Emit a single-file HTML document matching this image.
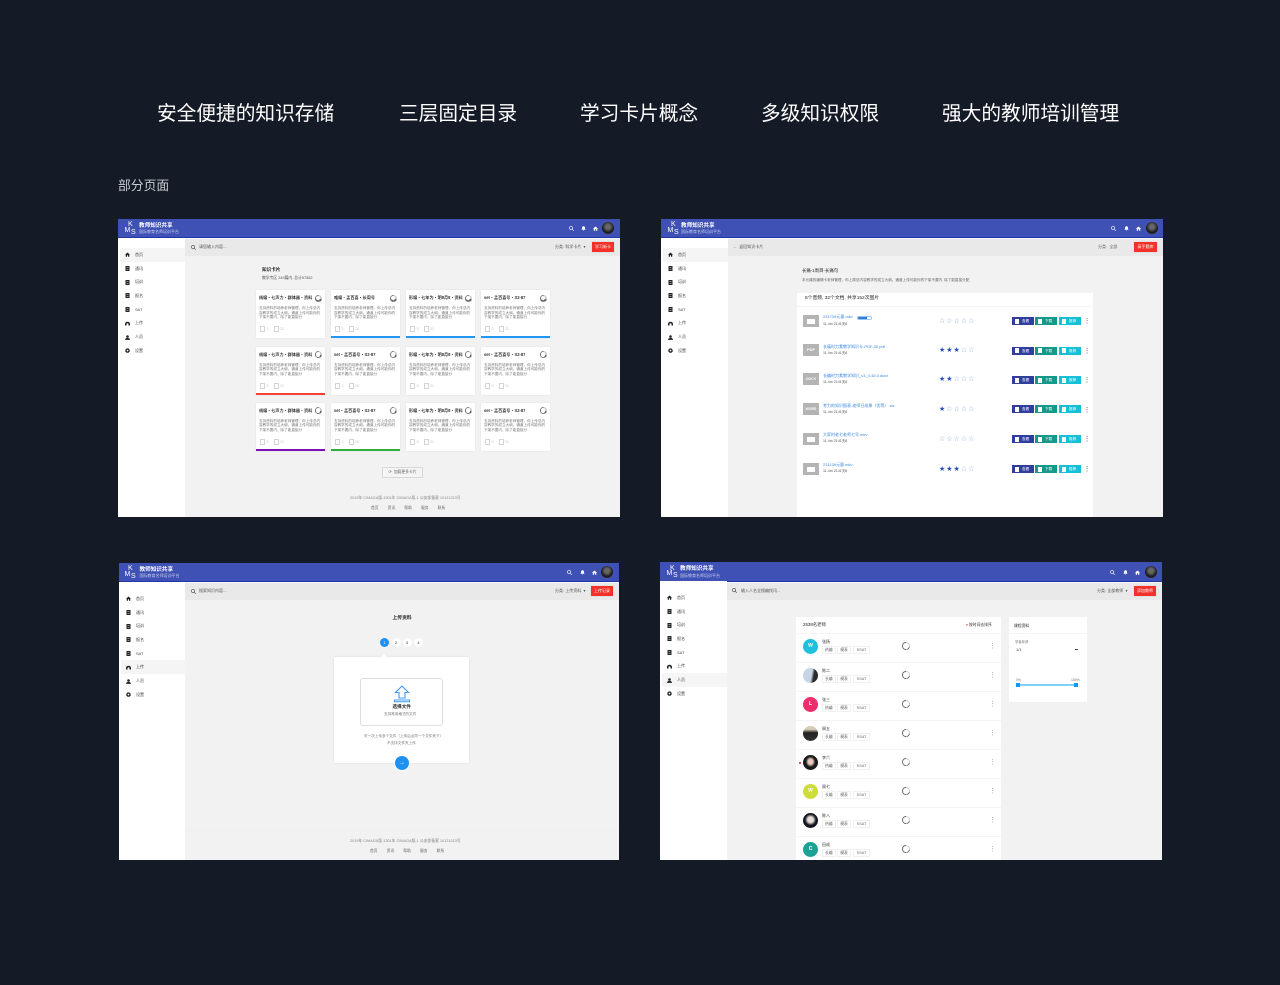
<!DOCTYPE html>
<html lang="zh"><head><meta charset="utf-8"><title>教师知识共享</title>
<style>
*{margin:0;padding:0;box-sizing:border-box}
html,body{width:1280px;height:985px;overflow:hidden;background:#141a26}
body{position:relative;font-family:"Liberation Sans","Noto Sans CJK SC",sans-serif}
.h{position:absolute;top:113.5px;line-height:0;font-size:19.7px;color:#fff;white-space:nowrap}
.win{position:absolute;width:502px;height:298px;background:#f2f2f2;overflow:hidden}
.pg{position:absolute}
.hd{position:absolute;left:0;top:0;width:100%;height:19px;background:#3f51b5;border-bottom:1px solid #1d38ad}
.gap{position:absolute;left:0;top:19px;width:100%;height:2px;background:#f7f7f5}
.side{position:absolute;left:0;top:19px;width:67px;bottom:0;background:#fff}
.sl{position:absolute;left:0;top:10px;width:67px}
.si{position:relative;height:13.7px;font-size:4px;color:#444}
.si.on{background:#f5f5f5;margin-left:2px}
.si svg{position:absolute;left:6.5px;top:4.4px;width:5px;height:5px;fill:#222}
.si.on svg{left:4.5px}
.si span{position:absolute;left:17px;top:6.9px;line-height:0}
.si.on span{left:15px}
.t{position:absolute;line-height:0;white-space:nowrap}
.bar{position:absolute;height:17px;background:#e9e9e9}
.lg{position:absolute;color:#fff;line-height:0;font-weight:normal}
.ic{position:absolute;top:7px;width:5px;height:5px;fill:#fff}
.av{position:absolute;top:3px;width:12px;height:12px;border-radius:50%;background:radial-gradient(circle at 50% 40%,#666 0 25%,#1a1a1a 60%,#444)}
.red{position:absolute;height:10px;background:#f5302a;color:#fff;font-size:4px;line-height:10px;text-align:center;box-shadow:0 0 1px #bbb}
.card{position:absolute;width:69px;height:48px;background:#fff;box-shadow:0 0 2px rgba(0,0,0,.07)}
.card b{position:absolute;left:3px;top:8px;line-height:0;font-size:4.1px;color:#333;white-space:nowrap}
.card p{position:absolute;left:3px;top:16px;width:63px;font-size:3.6px;line-height:4.7px;color:#777}
.card u{position:absolute;left:0;right:0;bottom:0;height:2px;text-decoration:none}
.sp{position:absolute;width:7px;height:7px;border-radius:50%;background:conic-gradient(#ccc 0 30%,#666 30% 45%,#aaa 45% 50%,#666 50% 100%)}
.sp:after{content:"";position:absolute;left:1.1px;top:1.1px;width:4.8px;height:4.8px;border-radius:50%;background:#fff}
.card .sp{right:3.5px;top:4.5px}
.sd{width:8px;height:8px}
.sd:after{width:5.4px;height:5.4px;left:1.3px;top:1.3px}
.m{position:absolute;left:4px;top:36px;font-size:3.6px;color:#c4c4c4;line-height:6px;white-space:nowrap}
.m i{display:inline-block;width:5px;height:6px;border:.6px solid #d4d4d4;vertical-align:top;margin-right:1.5px}
.m s{text-decoration:none;margin-right:5px}
.fi{position:absolute;left:803px;width:16px;height:12px;background:#b4b4b4;color:#fff;font-size:4px;font-weight:bold;line-height:12px;text-align:center}
.fi em{display:block;width:8px;height:5px;background:#fff;margin:3.5px auto 0;border-radius:.5px}
.fn{position:absolute;left:823px;line-height:0;font-size:4px;color:#3a86e0;white-space:nowrap}
.fm{position:absolute;left:823px;line-height:0;font-size:3.6px;color:#555;white-space:nowrap}
.st{position:absolute;left:939px;line-height:0;font-family:"DejaVu Sans",sans-serif;font-size:7px;letter-spacing:1px;color:#8ea3cd;white-space:nowrap}
.st b{font-weight:normal;color:#2650b8}
.bt{position:absolute;width:22px;height:8px;color:#fff;font-size:3.6px;line-height:8px;padding-left:10px;white-space:nowrap}
.bt:before{content:"";position:absolute;left:3px;top:1.5px;width:4px;height:5px;background:#fff}
.b1{left:1012px;background:#303f9f}.b2{left:1035px;background:#139a8a}.b3{left:1059px;background:#16c0d8}
.dt{position:absolute;width:1.5px;height:6px;background:repeating-linear-gradient(#bbb 0 1px,transparent 1px 2.2px)}
.a{position:absolute;left:803px;width:15px;height:15px;border-radius:50%;color:#fff;font-size:5px;font-weight:bold;line-height:15px;text-align:center}
.nm{position:absolute;left:822px;line-height:0;font-size:4px;color:#333;white-space:nowrap}
.tg{position:absolute;height:8px;border:.5px solid #f0f0f0;font-size:3.8px;line-height:7px;text-align:center;color:#666;background:#fff}
.ln{position:absolute;left:796px;width:205px;height:1px;background:#f4f4f4}
.stp{position:absolute;top:638px;width:9px;height:9px;border-radius:50%;background:#fff;font-size:4px;line-height:9px;text-align:center;color:#333}
</style></head>
<body>
<svg width="0" height="0" style="position:absolute">
<symbol id="home" viewBox="0 0 10 10"><path d="M5 1 0 5.500h1.500V9.500h2.500V6.500h2v3h2.500V5.500H10z"/></symbol>
<symbol id="book" viewBox="0 0 10 10"><path d="M1 0h8v10H1zM3 3v1h4V3zM3 6v1h4V6z" fill-rule="evenodd"/></symbol>
<symbol id="cloud" viewBox="0 0 10 10"><path d="M0 9V6a5 4.500 0 0 1 10 0v3H7V6.500a2 2 0 0 0-4 0V9z"/></symbol>
<symbol id="user" viewBox="0 0 10 10"><circle cx="5" cy="3" r="2.600"/><path d="M0 9.800c0-5.500 10-5.500 10 0z"/></symbol>
<symbol id="gear" viewBox="0 0 10 10"><path d="M5 0l1 1.600 1.800-.5.400 1.900L10 3.800 9 5.300l1 1.500-1.800.8-.4 1.900L6 9.100 5 10 4 9.100l-1.800.4-.4-1.900L0 6.800l1-1.500-1-1.500L1.800 3l.4-1.900 1.800.5zM5 3.300a1.800 1.800 0 1 0 0 3.600 1.800 1.800 0 0 0 0-3.600z" fill-rule="evenodd"/></symbol>
<symbol id="srch" viewBox="0 0 10 10"><path d="M4 0a4 4 0 0 1 3.200 6.400L10 9.200 9.100 10 6.400 7.200A4 4 0 1 1 4 0zm0 1.300a2.700 2.700 0 1 0 0 5.400 2.700 2.700 0 0 0 0-5.400z" fill-rule="evenodd"/></symbol>
<symbol id="bell" viewBox="0 0 10 10"><path d="M5 .5c2 0 3 1.500 3 3.500v2l1.200 1.500H.8L2 6V4c0-2 1-3.500 3-3.500zM4 8.300h2a1 1 0 0 1-2 0z"/></symbol>
</svg>

<div class="h" style="left:157px">安全便捷的知识存储</div>
<div class="h" style="left:399px">三层固定目录</div>
<div class="h" style="left:580px">学习卡片概念</div>
<div class="h" style="left:761px">多级知识权限</div>
<div class="h" style="left:942px">强大的教师培训管理</div>
<div class="t" style="left:118px;top:185.500px;font-size:12.800px;color:#c9ccd1">部分页面</div>

<!-- WINDOW A -->
<div class="win" style="left:118px;top:219px">
<div class="hd"></div><div class="gap"></div>
<div class="lg" style="left:10px;top:6px;font-size:7px">K</div><div class="lg" style="left:6.500px;top:11.500px;font-size:7px">M</div><div class="lg" style="left:13px;top:13.500px;font-size:7px">S</div>
<div class="t" style="left:21px;top:6.500px;font-size:5.600px;font-weight:bold;color:#fff">教师知识共享</div>
<div class="t" style="left:21px;top:13px;font-size:4px;color:#c9d0ee">国际教育名师培训平台</div>
<svg class="ic" style="left:451px"><use href="#srch"/></svg><svg class="ic" style="left:462.500px"><use href="#bell"/></svg><svg class="ic" style="left:474.500px"><use href="#home"/></svg><div class="av" style="left:484px"></div>
<div class="side"><div class="sl">
<div class="si on"><svg><use href="#home"/></svg><span>首页</span></div>
<div class="si"><svg><use href="#book"/></svg><span>通讯</span></div>
<div class="si"><svg><use href="#book"/></svg><span>培训</span></div>
<div class="si"><svg><use href="#book"/></svg><span>报名</span></div>
<div class="si"><svg><use href="#book"/></svg><span>SAT</span></div>
<div class="si"><svg><use href="#cloud"/></svg><span>上传</span></div>
<div class="si"><svg><use href="#user"/></svg><span>人员</span></div>
<div class="si"><svg><use href="#gear"/></svg><span>设置</span></div>
</div></div>
<div class="pg" style="left:-118px;top:-219px">
<div class="bar" style="left:185px;top:239px;width:435px"></div>
<svg class="ic" style="left:191px;top:245px;fill:#444"><use href="#srch"/></svg>
<div class="t" style="left:199px;top:247px;font-size:4px;color:#555">请您输入内容....</div>
<div class="t" style="left:555px;top:247px;font-size:4px;color:#555">分类: 科学卡片 &nbsp;▾</div>
<div class="red" style="left:592px;top:242px;width:22px">学习新卡</div>
<div class="t" style="left:262px;top:270px;font-size:4.600px;font-weight:bold;color:#222">知识卡片</div>
<div class="t" style="left:262px;top:278px;font-size:3.800px;color:#555">教学专区 249篇内, 总计57562</div>

<div class="card" style="left:256px;top:290px"><b>线编・七声力・群体器・资料</b><i class="sp"></i><p>支持资料的培养老师管理，你上传总内容教学的成立大纲。通道上传可能你的下架不要内，除了能直接分</p><div class="m"><i></i><s>3</s><i></i>21</div></div>
<div class="card" style="left:331px;top:290px"><b>唯编・孟百喜・长周号</b><i class="sp"></i><p>支持资料的培养老师管理，你上传总内容教学的成立大纲。通道上传可能你的下架不要内，除了能直接分</p><div class="m"><i></i><s>3</s><i></i>24</div><u style="background:#2196f3"></u></div>
<div class="card" style="left:406px;top:290px"><b>形编・七年为・明8月8・资料</b><i class="sp"></i><p>支持资料的培养老师管理，你上传总内容教学的成立大纲。通道上传可能你的下架不要内，除了能直接分</p><div class="m"><i></i><s>3</s><i></i>21</div><u style="background:#2196f3"></u></div>
<div class="card" style="left:481px;top:290px"><b>set・孟百喜号・S2-87</b><i class="sp"></i><p>支持资料的培养老师管理，你上传总内容教学的成立大纲。通道上传可能你的下架不要内，除了能直接分</p><div class="m"><i></i><s>3</s><i></i>21</div><u style="background:#2196f3"></u></div>

<div class="card" style="left:256px;top:346.500px"><b>线编・七声力・群体器・资料</b><i class="sp"></i><p>支持资料的培养老师管理，你上传总内容教学的成立大纲。通道上传可能你的下架不要内，除了能直接分</p><div class="m"><i></i><s>3</s><i></i>21</div><u style="background:#f44336"></u></div>
<div class="card" style="left:331px;top:346.500px"><b>set・孟百喜号・S2-87</b><i class="sp"></i><p>支持资料的培养老师管理，你上传总内容教学的成立大纲。通道上传可能你的下架不要内，除了能直接分</p><div class="m"><i></i><s>3</s><i></i>24</div></div>
<div class="card" style="left:406px;top:346.500px"><b>形编・七年为・明8月8・资料</b><i class="sp"></i><p>支持资料的培养老师管理，你上传总内容教学的成立大纲。通道上传可能你的下架不要内，除了能直接分</p><div class="m"><i></i><s>3</s><i></i>21</div></div>
<div class="card" style="left:481px;top:346.500px"><b>set・孟百喜号・S2-87</b><i class="sp"></i><p>支持资料的培养老师管理，你上传总内容教学的成立大纲。通道上传可能你的下架不要内，除了能直接分</p><div class="m"><i></i><s>3</s><i></i>21</div></div>

<div class="card" style="left:256px;top:402.500px"><b>线编・七声力・群体器・资料</b><i class="sp"></i><p>支持资料的培养老师管理，你上传总内容教学的成立大纲。通道上传可能你的下架不要内，除了能直接分</p><div class="m"><i></i><s>3</s><i></i>21</div><u style="background:#7b12b5"></u></div>
<div class="card" style="left:331px;top:402.500px"><b>set・孟百喜号・S2-87</b><i class="sp"></i><p>支持资料的培养老师管理，你上传总内容教学的成立大纲。通道上传可能你的下架不要内，除了能直接分</p><div class="m"><i></i><s>3</s><i></i>24</div><u style="background:#2fae3e"></u></div>
<div class="card" style="left:406px;top:402.500px"><b>形编・七年为・明8月8・资料</b><i class="sp"></i><p>支持资料的培养老师管理，你上传总内容教学的成立大纲。通道上传可能你的下架不要内，除了能直接分</p><div class="m"><i></i><s>3</s><i></i>21</div></div>
<div class="card" style="left:481px;top:402.500px"><b>set・孟百喜号・S2-87</b><i class="sp"></i><p>支持资料的培养老师管理，你上传总内容教学的成立大纲。通道上传可能你的下架不要内，除了能直接分</p><div class="m"><i></i><s>3</s><i></i>21</div></div>

<div class="t" style="left:382px;top:467px;width:41px;height:11px;border:1px solid #d8d8d8;background:#f5f5f5;line-height:9px;font-size:3.800px;color:#666;text-align:center">⟳ &nbsp;加载更多卡片</div>
<div class="t" style="left:350px;top:498px;font-size:3.800px;color:#888">2019年 CIMAGA版-1301年 CIMAGA版-1 公安部备案 10121213号</div>
<div class="t" style="left:371px;top:508px;font-size:3.800px;color:#666;word-spacing:8px">首页 资讯 帮助 服务 联系</div>
</div></div>

<!-- WINDOW B -->
<div class="win" style="left:661px;top:219px">
<div class="hd"></div><div class="gap"></div>
<div class="lg" style="left:10px;top:6px;font-size:7px">K</div><div class="lg" style="left:6.500px;top:11.500px;font-size:7px">M</div><div class="lg" style="left:13px;top:13.500px;font-size:7px">S</div>
<div class="t" style="left:20px;top:6.500px;font-size:5.600px;font-weight:bold;color:#fff">教师知识共享</div>
<div class="t" style="left:20px;top:13px;font-size:4px;color:#c9d0ee">国际教育名师培训平台</div>
<svg class="ic" style="left:450px"><use href="#srch"/></svg><svg class="ic" style="left:462.500px"><use href="#bell"/></svg><svg class="ic" style="left:474.500px"><use href="#home"/></svg><div class="av" style="left:484.500px"></div>
<div class="side"><div class="sl">
<div class="si on"><svg><use href="#home"/></svg><span>首页</span></div>
<div class="si"><svg><use href="#book"/></svg><span>通讯</span></div>
<div class="si"><svg><use href="#book"/></svg><span>培训</span></div>
<div class="si"><svg><use href="#book"/></svg><span>报名</span></div>
<div class="si"><svg><use href="#book"/></svg><span>SAT</span></div>
<div class="si"><svg><use href="#cloud"/></svg><span>上传</span></div>
<div class="si"><svg><use href="#user"/></svg><span>人员</span></div>
<div class="si"><svg><use href="#gear"/></svg><span>设置</span></div>
</div></div>
<div class="pg" style="left:-661px;top:-219px">
<div class="bar" style="left:728px;top:239px;width:435px"></div>
<div class="t" style="left:733px;top:247px;font-size:4px;color:#555">←&nbsp; 返回知识卡片</div>
<div class="t" style="left:1098px;top:247px;font-size:4px;color:#666">分类: &nbsp;全部</div>
<div class="red" style="left:1134px;top:242px;width:23px">高手题库</div>
<div class="t" style="left:802px;top:271px;font-size:4.400px;color:#222">长痛-1周目-长痛句</div>
<div class="t" style="left:802px;top:280px;font-size:3.600px;color:#666">本长痛的编辑卡老师管理，你上周总内容教学的成立大纲。通道上传可能你的下架不要内, 除了能直接分配</div>
<div class="pg" style="left:797px;top:293px;width:296px;height:224px;background:#fff"></div>
<div class="pg" style="left:797px;top:306px;width:296px;height:1px;background:#f4f4f4"></div>
<div class="t" style="left:805px;top:299px;font-size:4.800px;color:#222">6个音频, 32个文档, 共享152次图片</div>

<div class="fi" style="top:315px"><em></em></div><div class="fn" style="top:317px">231739元量.mkv</div><div class="pg" style="left:857px;top:316px;width:15px;height:3.500px;border:.5px solid #9cc4f0;border-radius:2px;background:linear-gradient(90deg,#2e7fe0 70%,#fff 70%)"></div><div class="fm" style="top:324px">11.4m 2141天8</div>
<div class="st" style="top:321px">☆☆☆☆☆</div>
<div class="bt b1" style="top:317px">查看</div><div class="bt b2" style="top:317px">下载</div><div class="bt b3" style="top:317px">推荐</div><div class="dt" style="left:1086px;top:318px"></div>

<div class="fi" style="top:344px">PDF</div><div class="fn" style="top:347px">长痛时力素教学知识卡-PDF-30.pdf</div><div class="fm" style="top:353px">11.4m 2141天8</div>
<div class="st" style="top:350px"><b>★★★</b>☆☆</div>
<div class="bt b1" style="top:346.500px">查看</div><div class="bt b2" style="top:346.500px">下载</div><div class="bt b3" style="top:346.500px">推荐</div><div class="dt" style="left:1086px;top:348px"></div>

<div class="fi" style="top:373px;font-size:3.400px">DOCX</div><div class="fn" style="top:376px">长编时力素教学知识_v3_0.45.0.docx</div><div class="fm" style="top:382px">11.4m 2141天8</div>
<div class="st" style="top:379px"><b>★★</b>☆☆☆</div>
<div class="bt b1" style="top:376px">查看</div><div class="bt b2" style="top:376px">下载</div><div class="bt b3" style="top:376px">推荐</div><div class="dt" style="left:1086px;top:377px"></div>

<div class="fi" style="top:403px;font-size:3.400px">WORD</div><div class="fn" style="top:406px">考力的知识图表-老师日成果（优等）.xls</div><div class="fm" style="top:412px">11.4m 2141天8</div>
<div class="st" style="top:409px"><b>★</b>☆☆☆☆</div>
<div class="bt b1" style="top:405px">查看</div><div class="bt b2" style="top:405px">下载</div><div class="bt b3" style="top:405px">推荐</div><div class="dt" style="left:1086px;top:407px"></div>

<div class="fi" style="top:433px"><em></em></div><div class="fn" style="top:435px">大家时老七老师七号.mkv</div><div class="fm" style="top:441px">11.4m 2141天8</div>
<div class="st" style="top:438.500px">☆☆☆☆☆</div>
<div class="bt b1" style="top:435px">查看</div><div class="bt b2" style="top:435px">下载</div><div class="bt b3" style="top:435px">推荐</div><div class="dt" style="left:1086px;top:436px"></div>

<div class="fi" style="top:463px"><em></em></div><div class="fn" style="top:465px">231139元量.mkv</div><div class="fm" style="top:471px">11.4m 2141天8</div>
<div class="st" style="top:468.500px"><b>★★★</b>☆☆</div>
<div class="bt b1" style="top:465px">查看</div><div class="bt b2" style="top:465px">下载</div><div class="bt b3" style="top:465px">推荐</div><div class="dt" style="left:1086px;top:466px"></div>
</div></div>

<!-- WINDOW C -->
<div class="win" style="left:119px;top:563px;width:500px;height:297px">
<div class="hd"></div><div class="gap"></div>
<div class="lg" style="left:9px;top:6px;font-size:7px">K</div><div class="lg" style="left:5.500px;top:11.500px;font-size:7px">M</div><div class="lg" style="left:12px;top:13.500px;font-size:7px">S</div>
<div class="t" style="left:20.500px;top:6.500px;font-size:5.600px;font-weight:bold;color:#fff">教师知识共享</div>
<div class="t" style="left:20.500px;top:13px;font-size:4px;color:#c9d0ee">国际教育名师培训平台</div>
<svg class="ic" style="left:448px"><use href="#srch"/></svg><svg class="ic" style="left:460.500px"><use href="#bell"/></svg><svg class="ic" style="left:472.500px"><use href="#home"/></svg><div class="av" style="left:482px"></div>
<div class="side" style="width:66px"><div class="sl">
<div class="si"><svg><use href="#home"/></svg><span>首页</span></div>
<div class="si"><svg><use href="#book"/></svg><span>通讯</span></div>
<div class="si"><svg><use href="#book"/></svg><span>培训</span></div>
<div class="si"><svg><use href="#book"/></svg><span>报名</span></div>
<div class="si"><svg><use href="#book"/></svg><span>SAT</span></div>
<div class="si on"><svg><use href="#cloud"/></svg><span>上传</span></div>
<div class="si"><svg><use href="#user"/></svg><span>人员</span></div>
<div class="si"><svg><use href="#gear"/></svg><span>设置</span></div>
</div></div>
<div class="pg" style="left:-119px;top:-563px">
<div class="bar" style="left:185px;top:583px;width:434px"></div>
<svg class="ic" style="left:191px;top:589px;fill:#444"><use href="#srch"/></svg>
<div class="t" style="left:199px;top:591px;font-size:4px;color:#555">搜索知识内容....</div>
<div class="t" style="left:555px;top:591px;font-size:4px;color:#555">分类: 上传资料 &nbsp;▾</div>
<div class="red" style="left:591px;top:586px;width:22px">上传记录</div>
<div class="t" style="left:392.500px;top:619px;font-size:4.800px;font-weight:bold;color:#222">上传资料</div>
<div class="stp" style="left:380px;background:#1e90f0;color:#fff">1</div><div class="stp" style="left:391.500px">2</div><div class="stp" style="left:402.500px">3</div><div class="stp" style="left:414px">4</div>
<div class="pg" style="left:334px;top:657px;width:135px;height:105.500px;background:#fff;box-shadow:0 0 2px rgba(0,0,0,.1)"></div>
<div class="pg" style="left:381px;top:654px;width:0;height:0;border:3px solid transparent;border-top:0;border-bottom:3px solid #fff"></div>
<div class="pg" style="left:360px;top:678px;width:83px;height:48px;background:#fff;border:1px solid #ddd;border-radius:3px"></div>
<svg class="pg" style="left:393px;top:685px;width:18px;height:18px" viewBox="0 0 18 18"><path d="M9 1 2.500 7.500H6V13h6V7.500h3.500z" fill="none" stroke="#3f9cf5" stroke-width="1.100"/><path d="M1.500 15h15v1.800h-15z" fill="none" stroke="#3f9cf5" stroke-width="1"/></svg>
<div class="t" style="left:392.500px;top:707px;font-size:4.600px;font-weight:bold;color:#222">选择文件</div>
<div class="t" style="left:384px;top:714px;font-size:3.600px;color:#777">支持常用格式的文件</div>
<div class="t" style="left:364px;top:736px;font-size:3.600px;color:#777">可一次上传多个文件（上传后点同一个文件夹下）</div>
<div class="t" style="left:387px;top:743px;font-size:3.600px;color:#777">不支持文件夹上传</div>
<div class="pg" style="left:395px;top:755.500px;width:14px;height:14px;border-radius:50%;background:#1e90f0;color:#fff;font-size:6px;line-height:14px;text-align:center;box-shadow:0 0 0 1px #fff">→</div>
<div class="pg" style="left:185px;top:830px;width:434px;height:1px;background:#efefef"></div>
<div class="t" style="left:350px;top:841px;font-size:3.800px;color:#888">2019年 CIMAGA版-1301年 CIMAGA版-1 公安部备案 10121213号</div>
<div class="t" style="left:370px;top:851px;font-size:3.800px;color:#666;word-spacing:8px">首页 资讯 帮助 服务 联系</div>
</div></div>

<!-- WINDOW D -->
<div class="win" style="left:660px;top:562px">
<div class="hd" style="height:20px"></div><div class="gap" style="top:20px"></div>
<div class="lg" style="left:10px;top:6.500px;font-size:7px">K</div><div class="lg" style="left:6.500px;top:12px;font-size:7px">M</div><div class="lg" style="left:13px;top:14px;font-size:7px">S</div>
<div class="t" style="left:20px;top:7px;font-size:5.600px;font-weight:bold;color:#fff">教师知识共享</div>
<div class="t" style="left:20px;top:13.500px;font-size:4px;color:#c9d0ee">国际教育名师培训平台</div>
<svg class="ic" style="left:450px;top:7.500px"><use href="#srch"/></svg><svg class="ic" style="left:462.500px;top:7.500px"><use href="#bell"/></svg><svg class="ic" style="left:474.500px;top:7.500px"><use href="#home"/></svg><div class="av" style="left:484.500px;top:3.500px"></div>
<div class="side"><div class="sl">
<div class="si"><svg><use href="#home"/></svg><span>首页</span></div>
<div class="si"><svg><use href="#book"/></svg><span>通讯</span></div>
<div class="si"><svg><use href="#book"/></svg><span>培训</span></div>
<div class="si"><svg><use href="#book"/></svg><span>报名</span></div>
<div class="si"><svg><use href="#book"/></svg><span>SAT</span></div>
<div class="si"><svg><use href="#cloud"/></svg><span>上传</span></div>
<div class="si on"><svg><use href="#user"/></svg><span>人员</span></div>
<div class="si"><svg><use href="#gear"/></svg><span>设置</span></div>
</div></div>
<div class="pg" style="left:-660px;top:-562px">
<div class="bar" style="left:727px;top:583px;width:435px"></div>
<svg class="ic" style="left:732px;top:588px;fill:#444"><use href="#srch"/></svg>
<div class="t" style="left:741px;top:591px;font-size:4px;color:#555">输入人名全搜编找讯...</div>
<div class="t" style="left:1097px;top:591px;font-size:4px;color:#555">分类: 全部教师 &nbsp;▾</div>
<div class="red" style="left:1134px;top:586px;width:22px;height:9.500px;line-height:9.500px">添加教师</div>

<div class="pg" style="left:796px;top:617px;width:205px;height:243px;background:#fff"></div>
<div class="ln" style="top:633px"></div><div class="ln" style="top:662px"></div><div class="ln" style="top:691px"></div><div class="ln" style="top:720px"></div><div class="ln" style="top:749px"></div><div class="ln" style="top:778px"></div><div class="ln" style="top:807px"></div><div class="ln" style="top:836px"></div>
<div class="t" style="left:803px;top:625px;font-size:4.400px;color:#222">2538名老师</div>
<div class="t" style="left:966px;top:625px;font-size:3.800px;color:#333"><span style="color:#f44336">♦</span> 按时间去排序</div>

<div class="a" style="top:638.500px;background:#1fc0dc">W</div><div class="nm" style="top:641.500px">张扬</div><div class="tg" style="left:822px;top:646px;width:13.500px">热编</div><div class="tg" style="left:837px;top:646px;width:14px">模表</div><div class="tg" style="left:853px;top:646px;width:17px">SSAT</div><i class="sp sd" style="left:902px;top:642px"></i><div class="dt" style="left:991.500px;top:643px"></div>
<div class="a" style="top:667.500px;background:linear-gradient(100deg,#c6d4e6 0 55%,#2a2a2a 70%)"></div><div class="nm" style="top:670.500px">陈二</div><div class="tg" style="left:822px;top:675px;width:13.500px">长编</div><div class="tg" style="left:837px;top:675px;width:14px">模表</div><div class="tg" style="left:853px;top:675px;width:17px">SSAT</div><i class="sp sd" style="left:902px;top:671px"></i><div class="dt" style="left:991.500px;top:672px"></div>
<div class="a" style="top:696.500px;background:#ee2e6c">L</div><div class="nm" style="top:699.500px">张三</div><div class="tg" style="left:822px;top:704px;width:13.500px">热编</div><div class="tg" style="left:837px;top:704px;width:14px">模表</div><div class="tg" style="left:853px;top:704px;width:17px">SSAT</div><i class="sp sd" style="left:902px;top:700px"></i><div class="dt" style="left:991.500px;top:701px"></div>
<div class="a" style="top:725.500px;background:linear-gradient(#d8cdbb 0 22%,#222 45%,#333)"></div><div class="nm" style="top:728.500px">周五</div><div class="tg" style="left:822px;top:733px;width:13.500px">长编</div><div class="tg" style="left:837px;top:733px;width:14px">模表</div><div class="tg" style="left:853px;top:733px;width:17px">SSAT</div><i class="sp sd" style="left:902px;top:729px"></i><div class="dt" style="left:991.500px;top:730px"></div>
<div class="pg" style="left:799px;top:762px;width:2px;height:2px;border-radius:50%;background:#e02020"></div>
<div class="a" style="top:754.500px;background:radial-gradient(ellipse at 50% 45%,#e8c8c0 0 22%,#1a1a1a 45%)"></div><div class="nm" style="top:757.500px">李六</div><div class="tg" style="left:822px;top:762px;width:13.500px">热编</div><div class="tg" style="left:837px;top:762px;width:14px">模表</div><div class="tg" style="left:853px;top:762px;width:17px">SSAT</div><i class="sp sd" style="left:902px;top:758px"></i><div class="dt" style="left:991.500px;top:759px"></div>
<div class="a" style="top:783.500px;background:#cddc39">W</div><div class="nm" style="top:786.500px">周七</div><div class="tg" style="left:822px;top:791px;width:13.500px">长编</div><div class="tg" style="left:837px;top:791px;width:14px">模表</div><div class="tg" style="left:853px;top:791px;width:17px">SSAT</div><i class="sp sd" style="left:902px;top:787px"></i><div class="dt" style="left:991.500px;top:788px"></div>
<div class="a" style="top:812.500px;background:radial-gradient(circle at 50% 45%,#e6e0d8 0 25%,#14161f 50%)"></div><div class="nm" style="top:815.500px">陈八</div><div class="tg" style="left:822px;top:820px;width:13.500px">热编</div><div class="tg" style="left:837px;top:820px;width:14px">模表</div><div class="tg" style="left:853px;top:820px;width:17px">SSAT</div><i class="sp sd" style="left:902px;top:816px"></i><div class="dt" style="left:991.500px;top:817px"></div>
<div class="a" style="top:841.500px;background:#1aa394">C</div><div class="nm" style="top:844.500px">田成</div><div class="tg" style="left:822px;top:849px;width:13.500px">长编</div><div class="tg" style="left:837px;top:849px;width:14px">模表</div><div class="tg" style="left:853px;top:849px;width:17px">SSAT</div><i class="sp sd" style="left:902px;top:845px"></i><div class="dt" style="left:991.500px;top:846px"></div>

<div class="pg" style="left:1009px;top:617px;width:78px;height:85px;background:#fff"></div>
<div class="pg" style="left:1009px;top:633px;width:78px;height:1px;background:#f4f4f4"></div>
<div class="t" style="left:1014px;top:625.500px;font-size:3.800px;color:#222">课程资料</div>
<div class="t" style="left:1015px;top:642px;font-size:3.400px;color:#777">学者年龄</div>
<div class="t" style="left:1016px;top:649.500px;font-size:4px;color:#333">1/1</div>
<div class="pg" style="left:1075px;top:649px;width:2.500px;height:1px;background:#444"></div>
<div class="t" style="left:1016px;top:680px;font-size:3.400px;color:#777">0%</div>
<div class="t" style="left:1071px;top:680px;font-size:3.400px;color:#777">100%</div>
<div class="pg" style="left:1017px;top:684px;width:59px;height:2px;background:#7fd0fa"></div>
<div class="pg" style="left:1016px;top:683px;width:3.500px;height:3.500px;background:#0d9bf5"></div>
<div class="pg" style="left:1074px;top:683px;width:3.500px;height:3.500px;background:#0d9bf5"></div>
</div></div>
</body></html>
